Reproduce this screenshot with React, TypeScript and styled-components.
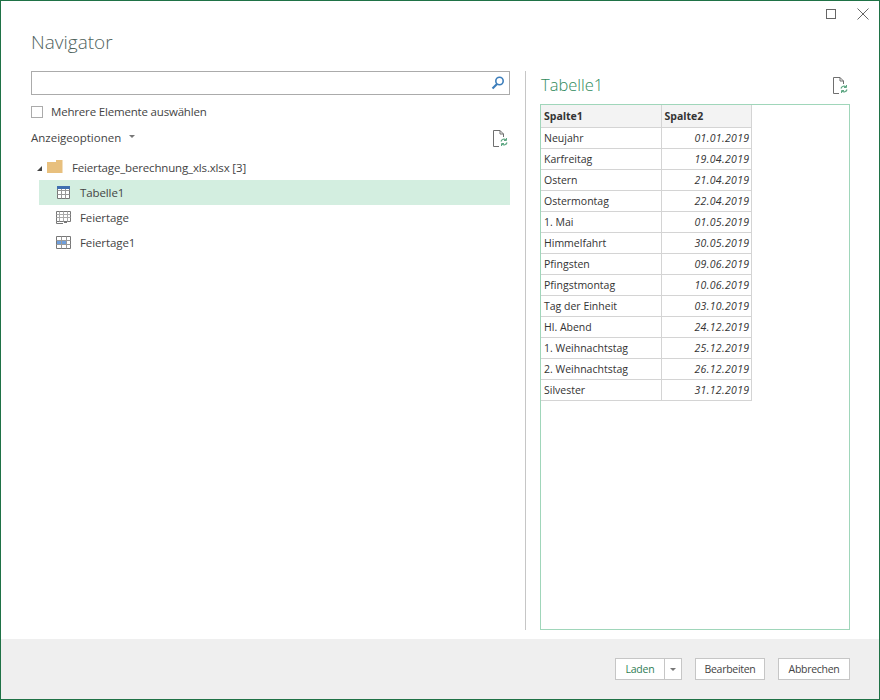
import React from "react";
import styled, { createGlobalStyle } from "styled-components";

const Global = createGlobalStyle`
  html, body { margin: 0; padding: 0; background: #fff; }
  #root { width: 880px; height: 700px; }
  * { box-sizing: border-box; }
`;

const Dialog = styled.div`
  width: 880px; height: 700px;
  border: 1px solid #1f7246;
  display: flex; flex-direction: column;
  background: #fff;
  font-family: "Open Sans", "Noto Sans", sans-serif;
  font-size: 11.5px;
  color: #444;
`;
const TitleBar = styled.div`
  height: 27px; display: flex; justify-content: flex-end; align-items: flex-start;
  padding: 7px 10px 0 0; gap: 20px;
`;
const WinButton = styled.svg<{ $w: number }>`width: ${p => p.$w}px; height: 12px; display: block;`;
const Heading = styled.h1`
  margin: 0 0 0 30px; height: 43px;
  font-weight: 300; font-size: 19px; line-height: 28px; color: #4f635c;
`;
const Body = styled.div`
  flex: 1; display: flex; padding: 0 29px 9px 30px; min-height: 0;
`;
const LeftPane = styled.div`
  width: 479px; display: flex; flex-direction: column;
`;
const Divider = styled.div`
  width: 1px; background: #c6c6c6; margin: 0 15px 0 15px;
`;
const RightPane = styled.div`
  flex: 1; display: flex; flex-direction: column; min-width: 0;
`;
const SearchBox = styled.div`
  height: 24px; border: 1px solid #ababab; display: flex; align-items: center; justify-content: flex-end;
  padding-right: 3px;
`;
const CheckRow = styled.label`
  display: flex; align-items: center; gap: 8px; margin-top: 11px; height: 12px;
`;
const CheckText = styled.span`
  margin-top: -1px; letter-spacing: -0.18px; white-space: nowrap;
`;
const CheckBox = styled.span`
  width: 12px; height: 12px; border: 1px solid #ababab; display: block;
`;
const OptionsRow = styled.div`
  display: flex; align-items: center; justify-content: space-between;
  margin-top: 8px; height: 24px; padding-right: 2px;
`;
const OptionsLabel = styled.span`
  display: flex; align-items: center; gap: 8px; margin-top: -2px;
`;
const Caret = styled.span`
  width: 0; height: 0; border-left: 3px solid transparent; border-right: 3px solid transparent;
  border-top: 3px solid #777; margin-top: -2px;
`;
const ArrowCaret = styled(Caret)`margin-top: 0;`;
const Tree = styled.div`
  margin-top: 7px; display: flex; flex-direction: column; margin-left: 6px;
`;
const RootNode = styled.div`
  height: 25px; display: flex; align-items: center; margin-top: -2px;
`;
const Expander = styled.span`
  width: 0; height: 0; margin-right: 5px; margin-top: 2px;
  border-left: 5px solid transparent; border-bottom: 5px solid #444;
`;
const FolderIcon = styled.svg`width: 16px; height: 13px; margin-right: 9px; margin-top: -2px;`;
const RootLabel = styled.span`letter-spacing: -0.16px; white-space: nowrap;`;
const NodeLabel = styled.span`letter-spacing: -0.1px; white-space: nowrap;`;
const TreeItem = styled.div<{ $selected?: boolean }>`
  height: 25px; display: flex; align-items: center; gap: 9px; padding-left: 17px; margin-left: 2px;
  background: ${p => (p.$selected ? "#d3eee0" : "transparent")};
`;
const TableIcon = styled.svg`width: 15px; height: 13px; display: block;`;
const PreviewHeader = styled.div`
  height: 33px; display: flex; align-items: center; justify-content: space-between;
  padding: 0 2px 5px 0;
`;
const PreviewTitle = styled.h2`
  margin: 0; font-weight: 300; font-size: 16.5px; line-height: 28px; color: #2f8a5c;
`;
const PreviewBox = styled.div`
  flex: 1; margin-left: -1px; border: 1px solid #a0d6ba; min-height: 0;
`;
const DataTable = styled.table`
  border-collapse: collapse; table-layout: fixed; width: 210px;
  font-size: 10.5px; color: #333;
`;
const HeadCell = styled.th<{ $w: number }>`
  width: ${p => p.$w}px; height: 22px; padding: 0 2px 0 3px; text-align: left; background: #f3f3f3;
  border-right: 1px solid #d4d4d4; border-bottom: 1px solid #d4d4d4; font-weight: 700;
`;
const Cell = styled.td`
  height: 21px; padding: 0 2px 0 3px; border-right: 1px solid #d4d4d4; border-bottom: 1px solid #d4d4d4;
  white-space: nowrap;
`;
const DateCell = styled(Cell)`
  text-align: right; font-style: italic; letter-spacing: 0.35px; padding-right: 1px;
`;
const Footer = styled.div`
  height: 60px; background: #efefef; display: flex; justify-content: flex-end; align-items: flex-start;
  padding: 19px 29px 0 0; gap: 13px;
`;
const SplitGroup = styled.div`
  display: flex; height: 22px; border: 1px solid #c6c6c6; background: #fff;
`;
const SplitMain = styled.div`
  width: 48px; display: flex; align-items: center; justify-content: center; color: #2f7d55;
  font-size: 10.5px; letter-spacing: -0.2px;
`;
const SplitArrow = styled.div`
  width: 17px; border-left: 1px solid #c6c6c6; display: flex; align-items: center; justify-content: center;
`;
const Button = styled.div<{ $w: number }>`
  width: ${p => p.$w}px; height: 22px; border: 1px solid #c6c6c6; background: #fff;
  display: flex; align-items: center; justify-content: center; font-size: 10.5px; letter-spacing: -0.28px; color: #444;
`;

const RefreshDoc = () => (
  <svg width="15" height="17" viewBox="0 0 15 17" fill="none">
    <path d="M.5 16.5V.5H7L10.5 4V7M7 .5V4H10.5M.5 16.5H6" stroke="#6f6f6f" />
    <path d="M8 11.5a3 3 0 0 1 5-1.5M14 12.5a3 3 0 0 1-5 1.5" stroke="#5fa884" strokeWidth="1.2" />
    <path d="M13.5 8v2.5H11M8.5 16v-2.5H11" stroke="#5fa884" />
  </svg>
);

const rows: [string, string][] = [
  ["Neujahr", "01.01.2019"],
  ["Karfreitag", "19.04.2019"],
  ["Ostern", "21.04.2019"],
  ["Ostermontag", "22.04.2019"],
  ["1. Mai", "01.05.2019"],
  ["Himmelfahrt", "30.05.2019"],
  ["Pfingsten", "09.06.2019"],
  ["Pfingstmontag", "10.06.2019"],
  ["Tag der Einheit", "03.10.2019"],
  ["Hl. Abend", "24.12.2019"],
  ["1. Weihnachtstag", "25.12.2019"],
  ["2. Weihnachtstag", "26.12.2019"],
  ["Silvester", "31.12.2019"],
];

export default function App() {
  return (
    <Dialog>
      <Global />
      <TitleBar>
        <WinButton $w={11} viewBox="0 0 11 12">
          <rect x="0.5" y="1.5" width="9" height="9" fill="none" stroke="#666" />
        </WinButton>
        <WinButton $w={12} viewBox="0 0 12 12">
          <path d="M.5 .5l11 11M11.5 .5l-11 11" stroke="#666" fill="none" />
        </WinButton>
      </TitleBar>
      <Heading>Navigator</Heading>
      <Body>
        <LeftPane>
          <SearchBox>
            <svg width="16" height="16" viewBox="0 0 16 16" fill="none">
              <circle cx="9.5" cy="6" r="3.7" stroke="#3d7ebb" strokeWidth="1.6" />
              <path d="M7 9l-4.5 4.5" stroke="#3d7ebb" strokeWidth="2.2" />
            </svg>
          </SearchBox>
          <CheckRow>
            <CheckBox />
            <CheckText>Mehrere Elemente auswählen</CheckText>
          </CheckRow>
          <OptionsRow>
            <OptionsLabel>
              Anzeigeoptionen <Caret />
            </OptionsLabel>
            <RefreshDoc />
          </OptionsRow>
          <Tree>
            <RootNode>
              <Expander />
              <FolderIcon viewBox="0 0 16 13">
                <path d="M0 2h9V0h6.5v13H0z" fill="#e8c07e" />
              </FolderIcon>
              <RootLabel>Feiertage_berechnung_xls.xlsx [3]</RootLabel>
            </RootNode>
            <TreeItem $selected>
              <TableIcon viewBox="0 0 15 13">
                <path d="M1.5 .5h12v12h-12z" fill="#fff" stroke="#777" />
                <path d="M1.5 4.5h12M1.5 8.5h12M5.5 .5v12M9.5 .5v12" stroke="#999" fill="none" />
                <rect x="1" y="0" width="13" height="3" fill="#3f6fb0" />
              </TableIcon>
              <NodeLabel>Tabelle1</NodeLabel>
            </TreeItem>
            <TreeItem>
              <TableIcon viewBox="0 0 15 13">
                <path d="M.5 .5h14v10H.5z" fill="none" stroke="#777" />
                <path d="M.5 3.5h14M.5 6.5h14M3.5 .5v10M7.5 .5v10M11.5 .5v10" stroke="#aaa" fill="none" />
                <path d="M.5 10.5v2h6.5M8 11.5h3" stroke="#777" fill="none" />
              </TableIcon>
              <NodeLabel>Feiertage</NodeLabel>
            </TreeItem>
            <TreeItem>
              <TableIcon viewBox="0 0 15 13">
                <rect x="1" y="5" width="10" height="3" fill="#6f9fdc" />
                <path d="M.5 .5h14v12H.5z" fill="none" stroke="#777" />
                <path d="M.5 4.5h14M.5 8.5h14M5.5 .5v12M10.5 .5v12" stroke="#9a9a9a" fill="none" />
              </TableIcon>
              <NodeLabel>Feiertage1</NodeLabel>
            </TreeItem>
          </Tree>
        </LeftPane>
        <Divider />
        <RightPane>
          <PreviewHeader>
            <PreviewTitle>Tabelle1</PreviewTitle>
            <RefreshDoc />
          </PreviewHeader>
          <PreviewBox>
            <DataTable>
              <thead>
                <tr>
                  <HeadCell $w={120}>Spalte1</HeadCell>
                  <HeadCell $w={90}>Spalte2</HeadCell>
                </tr>
              </thead>
              <tbody>
                {rows.map(([name, date]) => (
                  <tr key={name}>
                    <Cell>{name}</Cell>
                    <DateCell>{date}</DateCell>
                  </tr>
                ))}
              </tbody>
            </DataTable>
          </PreviewBox>
        </RightPane>
      </Body>
      <Footer>
        <SplitGroup>
          <SplitMain>Laden</SplitMain>
          <SplitArrow>
            <ArrowCaret />
          </SplitArrow>
        </SplitGroup>
        <Button $w={70}>Bearbeiten</Button>
        <Button $w={72}>Abbrechen</Button>
      </Footer>
    </Dialog>
  );
}
